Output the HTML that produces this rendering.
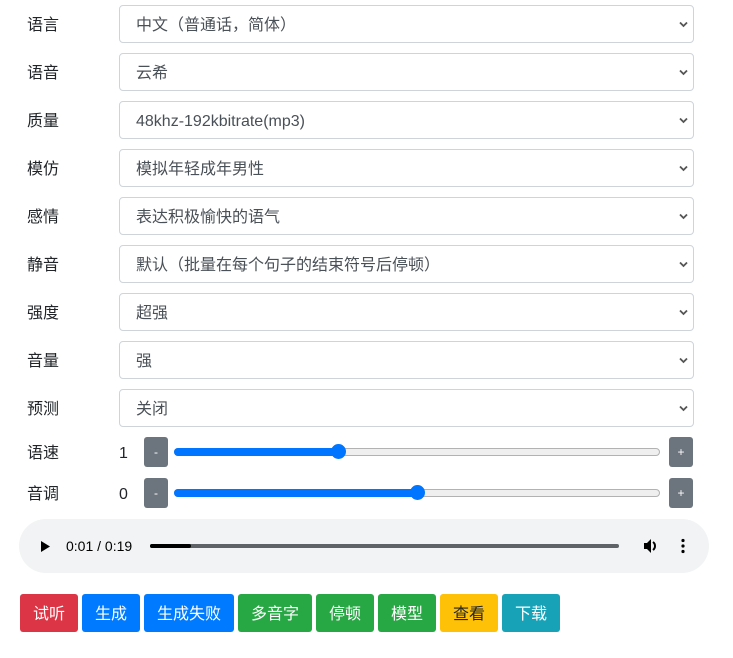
<!DOCTYPE html>
<html><head><meta charset="utf-8"><style>
body{margin:0;width:733px;height:658px;background:#fff;font-family:"Liberation Sans","Noto Sans CJK SC",sans-serif;font-size:16px;color:#212529;position:relative;overflow:hidden}
.lbl{position:absolute;left:27px;line-height:42px}
.sel{position:absolute;left:119px;width:575px;height:38px;border:1px solid #ced4da;border-radius:4px;line-height:40px;padding-left:16px;box-sizing:border-box;color:#495057}
.sel svg{position:absolute;right:5px;top:15px}
.sb{position:absolute;width:24px;height:30px;background:#6c757d;border-radius:3px;color:#fff;font-size:12px;text-align:center;line-height:30px}
.track{position:absolute;left:174px;width:486px;height:8px;background:#efefef;border:1px solid #b2b2b2;border-radius:5px;box-sizing:border-box}
.fill{position:absolute;left:174px;height:8px;background:#0075ff;border-radius:5px}
.thumb{position:absolute;width:15px;height:15px;border-radius:50%;background:#0075ff}
.btn{position:absolute;top:594px;height:38px;line-height:41px;color:#fff;text-align:center;border-radius:3px}
</style></head><body>
<div class="lbl" style="top:5px">语言</div><div class="sel" style="top:5px">中文（普通话，简体）<svg width="9" height="7"><path d="M1 1.5l3.5 3.5 3.5-3.5" stroke="#555" stroke-width="1.8" fill="none"/></svg></div>
<div class="lbl" style="top:53px">语音</div><div class="sel" style="top:53px">云希<svg width="9" height="7"><path d="M1 1.5l3.5 3.5 3.5-3.5" stroke="#555" stroke-width="1.8" fill="none"/></svg></div>
<div class="lbl" style="top:101px">质量</div><div class="sel" style="top:101px">48khz-192kbitrate(mp3)<svg width="9" height="7"><path d="M1 1.5l3.5 3.5 3.5-3.5" stroke="#555" stroke-width="1.8" fill="none"/></svg></div>
<div class="lbl" style="top:149px">模仿</div><div class="sel" style="top:149px">模拟年轻成年男性<svg width="9" height="7"><path d="M1 1.5l3.5 3.5 3.5-3.5" stroke="#555" stroke-width="1.8" fill="none"/></svg></div>
<div class="lbl" style="top:197px">感情</div><div class="sel" style="top:197px">表达积极愉快的语气<svg width="9" height="7"><path d="M1 1.5l3.5 3.5 3.5-3.5" stroke="#555" stroke-width="1.8" fill="none"/></svg></div>
<div class="lbl" style="top:245px">静音</div><div class="sel" style="top:245px">默认（批量在每个句子的结束符号后停顿）<svg width="9" height="7"><path d="M1 1.5l3.5 3.5 3.5-3.5" stroke="#555" stroke-width="1.8" fill="none"/></svg></div>
<div class="lbl" style="top:293px">强度</div><div class="sel" style="top:293px">超强<svg width="9" height="7"><path d="M1 1.5l3.5 3.5 3.5-3.5" stroke="#555" stroke-width="1.8" fill="none"/></svg></div>
<div class="lbl" style="top:341px">音量</div><div class="sel" style="top:341px">强<svg width="9" height="7"><path d="M1 1.5l3.5 3.5 3.5-3.5" stroke="#555" stroke-width="1.8" fill="none"/></svg></div>
<div class="lbl" style="top:389px">预测</div><div class="sel" style="top:389px">关闭<svg width="9" height="7"><path d="M1 1.5l3.5 3.5 3.5-3.5" stroke="#555" stroke-width="1.8" fill="none"/></svg></div>

<div class="lbl" style="top:433px">语速</div><div class="lbl" style="top:433px;left:119px">1</div>
<div class="sb" style="left:144px;top:437px">-</div>
<div class="track" style="top:448px"></div><div class="fill" style="top:448px;width:164px"></div><div class="thumb" style="left:331px;top:444px"></div>
<div class="sb" style="left:669px;top:437px">+</div>

<div class="lbl" style="top:474px">音调</div><div class="lbl" style="top:474px;left:119px">0</div>
<div class="sb" style="left:144px;top:478px">-</div>
<div class="track" style="top:489px"></div><div class="fill" style="top:489px;width:243px"></div><div class="thumb" style="left:410px;top:485px"></div>
<div class="sb" style="left:669px;top:478px">+</div>

<div style="position:absolute;left:19px;top:519px;width:690px;height:54px;border-radius:27px;background:#f1f3f4"></div>
<svg style="position:absolute;left:40px;top:540px" width="12" height="13"><path d="M1 1L10 6.5L1 12Z" fill="#000"/></svg>
<div style="position:absolute;left:66px;top:537px;font-size:14px;line-height:18px;color:#000">0:01 / 0:19</div>
<div style="position:absolute;left:150px;top:544px;width:469px;height:4px;background:#5f6368;border-radius:2px"></div>
<div style="position:absolute;left:150px;top:544px;width:41px;height:4px;background:#000;border-radius:2px"></div>
<svg style="position:absolute;left:643px;top:538px" width="16" height="16"><path d="M1 5h3l4-4v14l-4-4H1z" fill="#000"/><path d="M10 4a5 5 0 0 1 0 8" stroke="#000" stroke-width="2" fill="none"/></svg>
<svg style="position:absolute;left:680px;top:538px" width="6" height="16"><circle cx="3" cy="2.5" r="1.6" fill="#000"/><circle cx="3" cy="8" r="1.6" fill="#000"/><circle cx="3" cy="13.5" r="1.6" fill="#000"/></svg>

<div class="btn" style="left:20px;width:58px;background:#dc3545">试听</div>
<div class="btn" style="left:82px;width:58px;background:#007bff">生成</div>
<div class="btn" style="left:144px;width:90px;background:#007bff">生成失败</div>
<div class="btn" style="left:238px;width:74px;background:#28a745">多音字</div>
<div class="btn" style="left:316px;width:58px;background:#28a745">停顿</div>
<div class="btn" style="left:378px;width:58px;background:#28a745">模型</div>
<div class="btn" style="left:440px;width:58px;background:#ffc107;color:#212529">查看</div>
<div class="btn" style="left:502px;width:58px;background:#17a2b8">下载</div>
</body></html>
